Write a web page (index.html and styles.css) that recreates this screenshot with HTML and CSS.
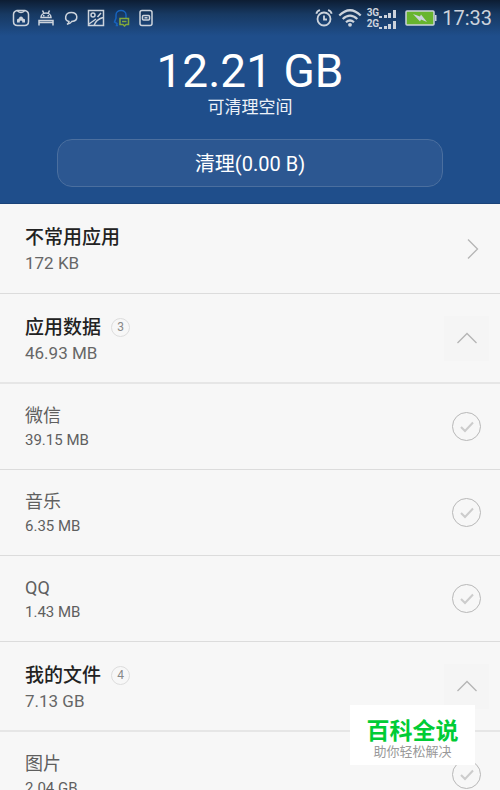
FILE: index.html
```html
<!DOCTYPE html>
<html lang="zh-CN">
<head>
<meta charset="utf-8">
<meta name="viewport" content="width=device-width, initial-scale=1">
<title>可清理空间</title>
<link rel="stylesheet" href="styles.css">
</head>
<body>
<div class="app">
  <header class="hero">
    <div class="status">
      <div class="status-group notices">
        <svg width="18" height="18" viewBox="0 0 18 18" aria-hidden="true"><path d="M5 1.500h8q3.500 1 3.500 4v7q0 4-4 4h-7q-4 0-4-4v-7q0-3 3.500-4z"/><path d="M5.500 2q3.500 3 7 0"/><path class="solid" d="M5 13.500V10.500q1-1 2-1 0-2 2-2t2 2q1 0 2 1v3h-2.800V12q-1.200-1-2.400 0v1.500z"/></svg>
        <svg width="18" height="18" viewBox="0 0 18 18" aria-hidden="true"><path d="M4 8.500a5 4.500 0 0 1 10 0zM5.500 1.500l1.500 3M12.500 1.500l-1.500 3M2 16.500v-5h14v5M2 13.500h14"/><path class="solid" d="M6 6h1.500v1.500H6zM10.500 6H12v1.500h-1.500z"/></svg>
        <svg width="18" height="18" viewBox="0 0 18 18" aria-hidden="true"><path d="M7 12.500C2 11.500 2.500 3.500 9.300 3.500s7.700 8.300.5 9C9 14 7.500 14.800 5 15.300c1.500-.9 2-1.800 2-2.800z"/></svg>
        <svg width="18" height="18" viewBox="0 0 18 18" aria-hidden="true"><path d="M1.500 1.500h15v15h-15zM2 15l7-5M7 16.500q2-6 9-8M10.500 8L14 4"/><circle cx="6" cy="6" r="2"/></svg>
        <svg width="18" height="18" viewBox="0 0 18 18" aria-hidden="true"><path class="penguin" d="M6 16.500H4.500L5 14.500 2.500 13 4 9V6c0-6 10-6 10 0v3"/><path class="bubble" d="M8 9.500h8.500v6H14l-1.500 1.500-1.500-1.500H8zM10 12.500h4.500"/></svg>
        <svg width="18" height="18" viewBox="0 0 18 18" aria-hidden="true"><rect x="3" y="1.500" width="12" height="15" rx="2"/><rect x="5.500" y="6.500" width="7" height="4.500" rx="1"/><path d="M7.500 8.800h3"/></svg>
      </div>
      <div class="status-group signals">
        <svg width="18" height="18" viewBox="0 0 18 18" aria-hidden="true"><g stroke-width="1.800"><circle cx="9" cy="10" r="6.500"/><path d="M9 6.500V10.500h3"/><path d="M1.300 4.700Q2 2 5 1.200M16.700 4.700Q16 2 13 1.200"/></g></svg>
        <svg width="24" height="18" viewBox="0 0 24 18" aria-hidden="true"><g stroke-width="2.200"><path d="M1.300 6.500Q12-4 22.700 6.500M4.700 10q7.300-6.800 14.600 0M8 13.300q4-3.600 8 0"/></g><circle class="solid" cx="12" cy="15.800" r="1.900"/></svg>
        <div class="networks">
          <div class="network"><span>3G</span><svg width="18" height="9" viewBox="0 0 18 9" aria-hidden="true"><path class="solid" d="M0 7h3v2H0zM5 6h3v3H5zM9 4h3v5H9zM14 1h3v8h-3z"/></svg></div>
          <div class="network"><span>2G</span><svg width="18" height="9" viewBox="0 0 18 9" aria-hidden="true"><path class="solid" d="M0 7h3v2H0zM5 6h3v3H5zM9 4h3v5H9zM14 1h3v8h-3z"/></svg></div>
        </div>
        <svg width="32" height="18" viewBox="0 0 32 18" aria-hidden="true"><rect class="battery" x="1" y="2" width="28" height="14" rx="1"/><path class="solid" d="M30 6h1.500v6H30zM8 5l7 2.500 1-2 6 7.500-6-2.500-1 2z"/></svg>
        <time class="clock">17:33</time>
      </div>
    </div>
    <h1 class="total">12.21 GB</h1>
    <p class="caption">可清理空间</p>
    <button class="clean" type="button">清理(0.00 B)</button>
  </header>

  <main class="list">
    <a class="row group" href="#unused">
      <span class="text"><span class="name">不常用应用</span><span class="size">172 KB</span></span>
      <svg class="arrow" width="12" height="22" viewBox="0 0 12 22" aria-hidden="true"><path d="M1 1.500L10.500 11 1 20.500"/></svg>
    </a>
    <section class="row group open">
      <div class="text"><h2 class="name">应用数据 <span class="count">3</span></h2><span class="size">46.93 MB</span></div>
      <button class="toggle" type="button" aria-label="收起应用数据"><svg width="22" height="12" viewBox="0 0 22 12" aria-hidden="true"><path d="M1.500 11L11 1.500 20.500 11"/></svg></button>
    </section>
    <label class="row item">
      <span class="text"><span class="name">微信</span><span class="size">39.15 MB</span></span>
      <span class="check"><input type="checkbox"><svg width="14" height="12" viewBox="0 0 14 12" aria-hidden="true"><path d="M1 6l4 4 8-8.500"/></svg></span>
    </label>
    <label class="row item">
      <span class="text"><span class="name">音乐</span><span class="size">6.35 MB</span></span>
      <span class="check"><input type="checkbox"><svg width="14" height="12" viewBox="0 0 14 12" aria-hidden="true"><path d="M1 6l4 4 8-8.500"/></svg></span>
    </label>
    <label class="row item">
      <span class="text"><span class="name">QQ</span><span class="size">1.43 MB</span></span>
      <span class="check"><input type="checkbox"><svg width="14" height="12" viewBox="0 0 14 12" aria-hidden="true"><path d="M1 6l4 4 8-8.500"/></svg></span>
    </label>
    <section class="row group open">
      <div class="text"><h2 class="name">我的文件 <span class="count">4</span></h2><span class="size">7.13 GB</span></div>
      <button class="toggle" type="button" aria-label="收起我的文件"><svg width="22" height="12" viewBox="0 0 22 12" aria-hidden="true"><path d="M1.500 11L11 1.500 20.500 11"/></svg></button>
    </section>
    <label class="row item">
      <span class="text"><span class="name">图片</span><span class="size">2.04 GB</span></span>
      <span class="check"><input type="checkbox"><svg width="14" height="12" viewBox="0 0 14 12" aria-hidden="true"><path d="M1 6l4 4 8-8.500"/></svg></span>
    </label>
  </main>

  <aside class="brand">
    <strong>百科全说</strong>
    <span>助你轻松解决</span>
  </aside>
</div>
</body>
</html>
```
FILE: styles.css
```css
* { box-sizing: border-box; }

body {
  margin: 0;
  background: #f7f7f7;
  font-family: Roboto, "Noto Sans CJK SC", sans-serif;
}

h1, h2, p { margin: 0; font-weight: 400; }
svg { display: block; flex: none; fill: none; stroke: currentColor; }

.app {
  position: relative;
  display: flex;
  flex-direction: column;
  height: 100vh;
  overflow: hidden;
}

/* Header */
.hero {
  flex: none;
  display: flex;
  flex-direction: column;
  align-items: center;
  padding-bottom: 16px;
  border-bottom: 1px solid #1a4379;
  background: linear-gradient(#0d1d33 0, #173962 14px, #1f4e8b 36px, #1f4e8b 100%);
  color: #fff;
}

.status {
  display: flex;
  justify-content: space-between;
  align-items: center;
  align-self: stretch;
  height: 36px;
  padding: 0 8px 0 12px;
  color: #ccd3dc;
}

.status svg { stroke-width: 1.5; }
.status-group { display: flex; align-items: center; gap: 7px; }
.signals { gap: 5px; }
.networks { padding-right: 3px; }
.status .solid { fill: currentColor; stroke: none; }
.status .penguin { stroke: #1763bd; }
.status .bubble { stroke: #82a93b; }
.status .battery { fill: #68b52e; }
.network { display: flex; align-items: flex-end; height: 11px; }
.network span { font-size: 10px; line-height: 11px; font-weight: 700; }
.clock { font-size: 20px; line-height: 24px; }

.total { margin-top: 8px; font-size: 46px; line-height: 54px; }
.caption { font-size: 17px; line-height: 18px; color: #edf2f8; }

.clean {
  width: calc(100% - 114px);
  height: 48px;
  margin-top: 23px;
  padding: 2px 0 0;
  border: 1px solid #4b6f9f;
  border-radius: 15px;
  background: #2c5791;
  color: #fff;
  font: 20px/24px Roboto, "Noto Sans CJK SC", sans-serif;
}

/* List */
.list { flex: 1; min-height: 0; overflow: hidden; }

.row {
  display: flex;
  justify-content: space-between;
  align-items: center;
  padding: 0 19px 0 25px;
  border-bottom: 1px solid #dcdcdc;
  color: #5f5f5f;
  text-decoration: none;
}

.text { display: flex; flex-direction: column; padding-top: 3px; }
.group { height: 90px; }
.group .name { display: flex; align-items: center; gap: 10px; font-size: 19px; line-height: 26px; font-weight: 500; color: #222; }
.group .size { font-size: 17px; line-height: 24px; color: #666; }
.group.open { border-bottom: 2px solid #e6e6e6; padding-right: 11px; }
.item { height: 86px; }
.item .name { font-size: 18px; line-height: 24px; }
.item .size { font-size: 15px; line-height: 24px; }

.count {
  width: 19px;
  height: 19px;
  border: 1px solid #ddd;
  border-radius: 50%;
  color: #888;
  font-size: 12px;
  line-height: 17px;
  font-weight: 400;
  text-align: center;
}

.arrow { margin-right: 2px; color: #b5b5b5; stroke-width: 1.3; }

.toggle {
  display: grid;
  place-items: center;
  width: 45px;
  height: 45px;
  padding: 0;
  border: 0;
  background: #f5f5f5;
  color: #b5b5b5;
  stroke-width: 1.3;
}

.check { display: grid; place-items: center; color: #ccc; }
.check > * { grid-area: 1 / 1; }
.check svg { stroke-width: 2; pointer-events: none; }
.check input {
  appearance: none;
  width: 29px;
  height: 29px;
  margin: 0;
  border: 1px solid #b8b8b8;
  border-radius: 50%;
}

/* Floating brand card */
.brand {
  position: absolute;
  right: 25px;
  bottom: 25px;
  display: flex;
  flex-direction: column;
  align-items: center;
  justify-content: center;
  width: 125px;
  height: 60px;
  padding-top: 12px;
  background: #fff;
}

.brand strong { color: #00cc35; font-size: 23px; line-height: 22px; }
.brand span { color: #999; font-size: 13px; line-height: 18px; }
```
